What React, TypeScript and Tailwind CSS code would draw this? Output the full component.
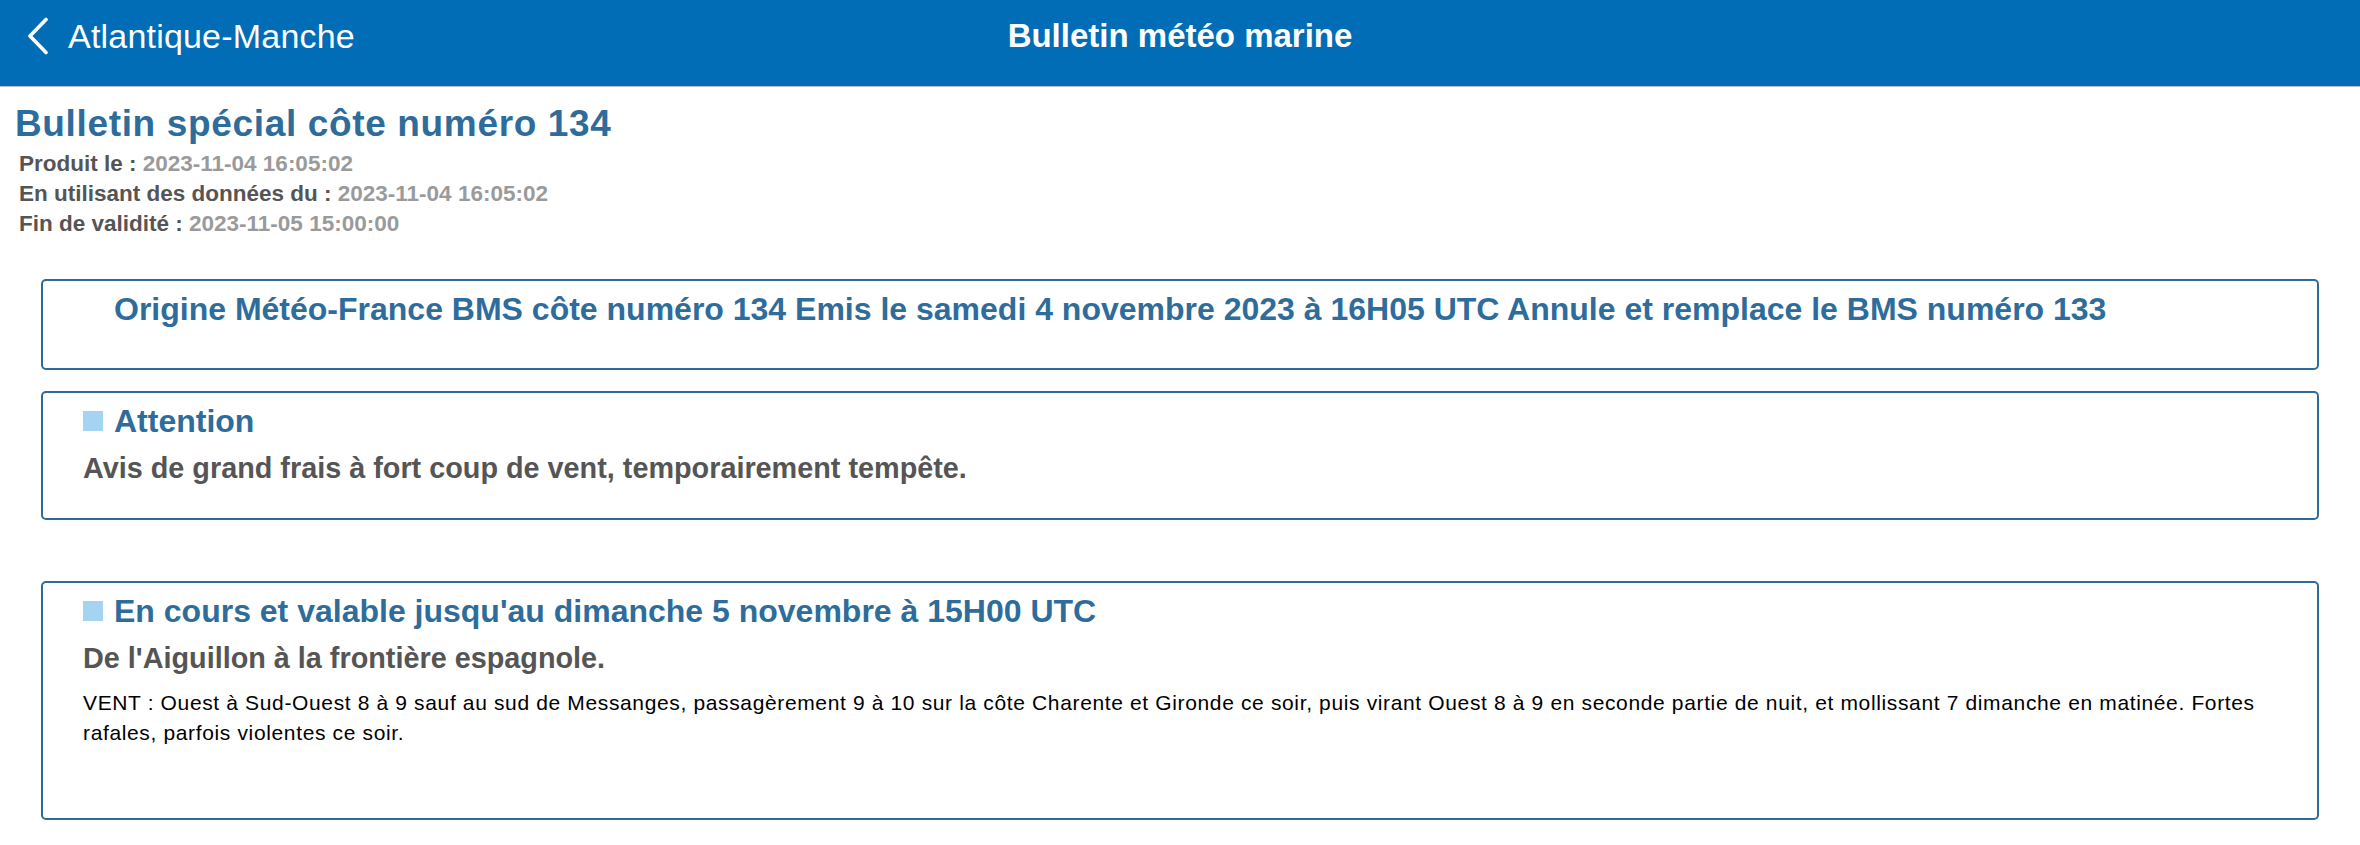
import React from "react";

const font = { fontFamily: '"Liberation Sans", Arial, Helvetica, sans-serif' };

function Marker({ show = true }: { show?: boolean }) {
  return <span className={`block w-[20px] h-[20px] shrink-0 ${show ? "bg-[#a4d4f2]" : "bg-transparent"}`} />;
}

function Box({ children, className = "" }: { children: React.ReactNode; className?: string }) {
  return (
    <div className={`mx-[41px] rounded-[5px] border-2 border-[#2e6b98] pl-[40px] pr-[40px] pt-[10px] ${className}`}>
      {children}
    </div>
  );
}

function Heading({ children, marker = true }: { children: React.ReactNode; marker?: boolean }) {
  return (
    <div className="flex items-center gap-[11px]">
      <Marker show={marker} />
      <h2 className="text-[32px] leading-[36px] font-bold text-[#2e6d9b]">{children}</h2>
    </div>
  );
}

export default function App() {
  return (
    <div className="w-[2360px] h-[845px] bg-white overflow-hidden" style={font}>
      <header className="h-[87px] bg-[#006db6] border-b border-[#bdbdbd] grid grid-cols-[1fr_auto_1fr] items-center pb-[14px]">
        <div className="flex items-center pl-[27px] gap-[19px] text-white">
          <svg width="22" height="38" viewBox="0 0 22 38" fill="none">
            <path d="M19 2.5 L3 19 L19 35.5" stroke="white" strokeWidth="3.6" strokeLinecap="round" strokeLinejoin="round" />
          </svg>
          <span className="text-[34px] leading-[40px] tracking-[0.2px]">Atlantique-Manche</span>
        </div>
        <h1 className="text-[33px] leading-[38px] font-bold text-white">Bulletin météo marine</h1>
        <div />
      </header>

      <div className="pt-[16px]">
        <div className="pl-[15px] text-[37px] leading-[42px] font-bold text-[#2e6d9b] tracking-[0.65px]">
          Bulletin spécial côte numéro 134
        </div>
        <div className="pl-[19px] pt-[4px] text-[22.5px] leading-[30px] font-bold">
          <div>
            <span className="text-[#555555]">Produit le : </span>
            <span className="text-[#9a9a9a]">2023-11-04 16:05:02</span>
          </div>
          <div>
            <span className="text-[#555555]">En utilisant des données du : </span>
            <span className="text-[#9a9a9a]">2023-11-04 16:05:02</span>
          </div>
          <div>
            <span className="text-[#555555]">Fin de validité : </span>
            <span className="text-[#9a9a9a]">2023-11-05 15:00:00</span>
          </div>
        </div>
      </div>

      <div className="mt-[40px] flex flex-col">
        <Box className="pb-[41px]">
          <Heading marker={false}>
            Origine Météo-France BMS côte numéro 134 Emis le samedi 4 novembre 2023 à 16H05 UTC Annule et remplace le BMS numéro 133
          </Heading>
        </Box>

        <Box className="mt-[21px] pb-[33px]">
          <Heading>Attention</Heading>
          <p className="mt-[12px] text-[28.8px] leading-[34px] font-bold text-[#555555]">
            Avis de grand frais à fort coup de vent, temporairement tempête.
          </p>
        </Box>

        <Box className="mt-[61px] pb-[70px]">
          <Heading>En cours et valable jusqu'au dimanche 5 novembre à 15H00 UTC</Heading>
          <p className="mt-[12px] text-[28.8px] leading-[34px] font-bold text-[#555555]">
            De l'Aiguillon à la frontière espagnole.
          </p>
          <p className="mt-[13px] text-[21px] leading-[30px] tracking-[0.64px] text-black">
            VENT : Ouest à Sud-Ouest 8 à 9 sauf au sud de Messanges, passagèrement 9 à 10 sur la côte Charente et Gironde ce soir, puis virant Ouest 8 à 9 en seconde partie de nuit, et mollissant 7 dimanche en matinée. Fortes rafales, parfois violentes ce soir.
          </p>
        </Box>
      </div>
    </div>
  );
}
